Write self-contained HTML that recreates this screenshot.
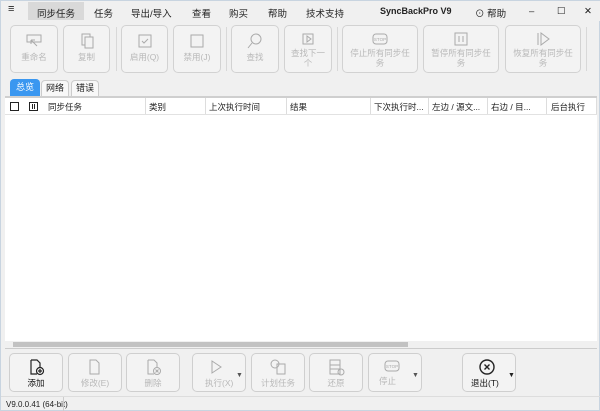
<!DOCTYPE html>
<html><head><meta charset="utf-8"><style>
*{margin:0;padding:0;box-sizing:border-box}
body{width:600px;height:411px;background:#f0f0f0;font-family:"Liberation Sans","Noto Sans CJK SC",sans-serif;font-size:9px;color:#222;position:relative;overflow:hidden;border:1px solid #c8d4e0}
.a{position:absolute}
.menu span{position:absolute;top:5px;font-size:9.5px}
.tb{position:absolute;top:24px;height:48px;border:1px solid #d2d2d2;border-radius:5px;background:#f3f3f3;color:#b8b8b8;text-align:center;font-size:8.5px;line-height:10px}
.tb svg{display:block;margin:6px auto 2px}
.sep{position:absolute;width:1px;background:#d8d8d8}
.bb{position:absolute;top:352px;height:39px;border:1px solid #cfcfcf;border-radius:5px;background:#f3f3f3;color:#b8b8b8;font-size:8.5px;text-align:center}
.bb svg{display:block;margin:4px auto 1px}
.hd span{position:absolute;top:100px;font-size:8.5px}
.hd i{position:absolute;top:97px;width:1px;height:16px;background:#ddd}
.arr{position:absolute;top:18px;font-size:7px;color:#555}
</style></head><body>
<div class="a" style="left:0;top:0;width:600px;height:20px;background:#f0f0f0"></div>
<div class="a" style="left:27px;top:1px;width:56px;height:18px;background:#d9d9d9"></div>
<div class="menu">
<span style="left:7px;font-size:11px;top:2px">≡</span>
<span style="left:36px">同步任务</span>
<span style="left:93px">任务</span>
<span style="left:130px">导出/导入</span>
<span style="left:191px">查看</span>
<span style="left:228px">购买</span>
<span style="left:267px">帮助</span>
<span style="left:305px">技术支持</span>
<span style="left:379px;font-weight:bold;font-size:9px">SyncBackPro V9</span>
<span style="left:474px">⊙ 帮助</span>
<span style="left:528px">–</span>
<span style="left:556px">☐</span>
<span style="left:583px">✕</span>
</div>

<div class="tb" style="left:9px;width:48px"><svg width="18" height="18" viewBox="0 0 18 18" fill="none" stroke="#aaa"><rect x="2" y="3" width="14" height="7"/><path d="M6 8l6 6M6 8v4M6 8h4"/></svg>重命名</div>
<div class="tb" style="left:62px;width:47px"><svg width="18" height="18" viewBox="0 0 18 18" fill="none" stroke="#aaa"><rect x="4" y="2" width="8" height="11"/><rect x="7" y="5" width="8" height="11" fill="#f3f3f3"/></svg>复制</div>
<div class="sep" style="left:115px;top:26px;height:44px"></div>
<div class="tb" style="left:120px;width:47px"><svg width="18" height="18" viewBox="0 0 18 18" fill="none" stroke="#aaa"><rect x="3" y="3" width="12" height="12"/><path d="M6 9l2 2 4-4"/></svg>启用(Q)</div>
<div class="tb" style="left:172px;width:48px"><svg width="18" height="18" viewBox="0 0 18 18" fill="none" stroke="#aaa"><rect x="3" y="3" width="12" height="12"/></svg>禁用(J)</div>
<div class="sep" style="left:225px;top:26px;height:44px"></div>
<div class="tb" style="left:230px;width:48px"><svg width="18" height="18" viewBox="0 0 18 18" fill="none" stroke="#aaa"><circle cx="10" cy="7" r="5"/><path d="M6 11l-4 5"/></svg>查找</div>
<div class="tb" style="left:283px;width:48px"><svg width="18" height="14" viewBox="0 0 18 14" fill="none" stroke="#aaa"><rect x="4" y="2" width="10" height="10"/><path d="M8 4v6l4-3z"/></svg>查找下一<br>个</div>
<div class="sep" style="left:336px;top:26px;height:44px"></div>
<div class="tb" style="left:341px;width:76px"><svg width="18" height="14" viewBox="0 0 18 14" fill="none" stroke="#aaa"><rect x="2" y="2" width="14" height="10" rx="3"/><text x="9" y="9" font-size="4.5" fill="#aaa" stroke="none" text-anchor="middle">STOP</text></svg>停止所有同步任<br>务</div>
<div class="tb" style="left:422px;width:76px"><svg width="18" height="14" viewBox="0 0 18 14" fill="none" stroke="#aaa"><rect x="3" y="1" width="12" height="12"/><path d="M7 4v6M11 4v6"/></svg>暂停所有同步任<br>务</div>
<div class="tb" style="left:504px;width:76px"><svg width="18" height="14" viewBox="0 0 18 14" fill="none" stroke="#aaa"><path d="M4 1v12M7 1v12l8-6z"/></svg>恢复所有同步任<br>务</div>
<div class="sep" style="left:585px;top:26px;height:44px"></div>

<div class="a" style="left:9px;top:78px;width:30px;height:17px;background:#3a97f0;border-radius:4px 4px 0 0;color:#fff;font-size:9px;text-align:center;line-height:17px">总览</div>
<div class="a" style="left:40px;top:79px;width:28px;height:16px;background:#f8f8f8;border:1px solid #ccc;border-bottom:none;border-radius:4px 4px 0 0;font-size:9px;text-align:center;line-height:15px">网络</div>
<div class="a" style="left:70px;top:79px;width:28px;height:16px;background:#f8f8f8;border:1px solid #ccc;border-bottom:none;border-radius:4px 4px 0 0;font-size:9px;text-align:center;line-height:15px">错误</div>
<div class="a" style="left:4px;top:95px;width:592px;height:2px;background:#cfcfcf"></div>
<div class="a" style="left:4px;top:97px;width:592px;height:17px;background:#fff;border-bottom:1px solid #e2e2e2"></div>
<div class="hd">
<div class="a" style="left:9px;top:101px;width:9px;height:9px;border:1px solid #222"></div>
<div class="a" style="left:28px;top:101px;width:9px;height:9px;border:1px solid #222"><div style="position:absolute;left:2px;top:1px;width:3px;height:5px;border-left:1px solid #222;border-right:1px solid #222"></div></div>
<span style="left:47px">同步任务</span><i style="left:144px"></i>
<span style="left:148px">类别</span><i style="left:204px"></i>
<span style="left:208px">上次执行时间</span><i style="left:285px"></i>
<span style="left:289px">结果</span><i style="left:369px"></i>
<span style="left:373px">下次执行时...</span><i style="left:427px"></i>
<span style="left:431px">左边 / 源文...</span><i style="left:486px"></i>
<span style="left:490px">右边 / 目...</span><i style="left:545px"></i>
<span style="left:550px">后台执行</span><i style="left:595px"></i>
</div>
<div class="a" style="left:4px;top:114px;width:592px;height:226px;background:#fff"></div>
<div class="a" style="left:4px;top:340px;width:592px;height:8px;background:#f0f0f0;border-bottom:1px solid #ccc"></div>
<div class="a" style="left:12px;top:341px;width:395px;height:5px;background:#c2c2c2"></div>

<div class="bb" style="left:8px;width:54px;color:#111"><svg width="18" height="18" viewBox="0 0 18 18" fill="none" stroke="#222" stroke-width="1.2"><path d="M4 2h6l3 3v4M4 2v14h6"/><circle cx="13" cy="13" r="3.5"/><path d="M13 11v4M11 13h4"/></svg>添加</div>
<div class="bb" style="left:67px;width:54px"><svg width="18" height="18" viewBox="0 0 18 18" fill="none" stroke="#aaa"><path d="M4 2h6l3 3v11H4z"/></svg>修改(E)</div>
<div class="bb" style="left:125px;width:54px"><svg width="18" height="18" viewBox="0 0 18 18" fill="none" stroke="#aaa"><path d="M4 2h6l3 3v4M4 2v14h6"/><circle cx="13" cy="13" r="3.5"/><path d="M11.5 11.5l3 3M14.5 11.5l-3 3"/></svg>删除</div>
<div class="bb" style="left:191px;width:54px;text-align:left;padding-left:12px"><svg width="18" height="18" viewBox="0 0 18 18" fill="none" stroke="#aaa" style="margin-left:2px"><path d="M5 3v12l9-6z"/></svg>执行(X)<span class="arr" style="left:43px">▼</span></div>
<div class="bb" style="left:250px;width:54px"><svg width="18" height="18" viewBox="0 0 18 18" fill="none" stroke="#aaa"><circle cx="6" cy="6" r="4"/><rect x="8" y="6" width="8" height="10"/></svg>计划任务</div>
<div class="bb" style="left:308px;width:54px"><svg width="18" height="18" viewBox="0 0 18 18" fill="none" stroke="#aaa"><rect x="3" y="2" width="10" height="14"/><path d="M3 7h10M3 11h10"/><circle cx="14" cy="14" r="3"/></svg>还原</div>
<div class="bb" style="left:367px;width:54px;text-align:left;padding-left:10px"><svg width="18" height="16" viewBox="0 0 18 16" fill="none" stroke="#aaa" style="margin-left:4px"><rect x="2" y="3" width="14" height="10" rx="3"/><text x="9" y="10" font-size="4.5" fill="#aaa" stroke="none" text-anchor="middle">STOP</text></svg>停止<span class="arr" style="left:43px">▼</span></div>
<div class="bb" style="left:461px;width:54px;color:#111;text-align:left;padding-left:8px"><svg width="18" height="18" viewBox="0 0 18 18" fill="none" stroke="#222" stroke-width="1.4" style="margin-left:7px"><circle cx="9" cy="9" r="7"/><path d="M6.5 6.5l5 5M11.5 6.5l-5 5"/></svg>退出(T)<span class="arr" style="left:45px;color:#222">▼</span></div>

<div class="a" style="left:0;top:395px;width:600px;height:1px;background:#ddd"></div>
<div class="a" style="left:5px;top:399px;font-size:8px;color:#222">V9.0.0.41 (64-bit)</div>
<div class="a" style="left:62px;top:396px;width:1px;height:14px;background:#ccc"></div>
</body></html>
